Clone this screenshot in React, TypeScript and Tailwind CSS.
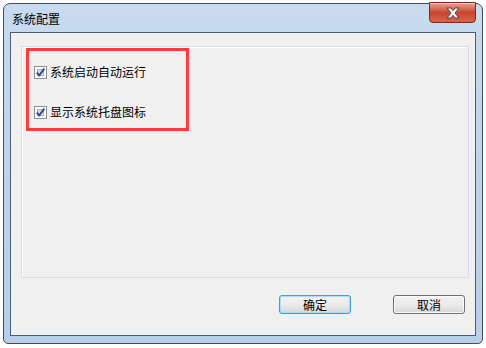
import React from 'react'

const font = { fontFamily: '"SimSun", "Noto Sans CJK SC", sans-serif' }

function CheckBox() {
  return (
    <span className="relative flex h-[13px] w-[13px] shrink-0 items-center justify-center border border-[#8e8f8f] bg-white">
      <span className="absolute inset-[2px] bg-gradient-to-br from-[#cbd0d6] to-[#f4f5f6] border border-[#aeb3b9]" />
      <svg className="relative" width="11" height="11" viewBox="0 0 11 11">
        <path d="M1.8 5.6 L4.2 8.4 L9.4 1.6" fill="none" stroke="#2a4a8e" strokeWidth="1.9" />
      </svg>
    </span>
  )
}

function Option({ label }: { label: string }) {
  return (
    <label className="flex h-[14px] items-center gap-[3px] text-[12px] leading-none text-black">
      <CheckBox />
      <span>{label}</span>
    </label>
  )
}

function Button({ label, focused }: { label: string; focused?: boolean }) {
  return (
    <button
      className={
        'h-[19px] w-[72px] rounded-[3px] border bg-gradient-to-b from-[#f2f2f2] via-[#ebebeb] to-[#d6d6d6] text-[12px] leading-none text-black ' +
        (focused ? 'border-[#3c9fd6] shadow-[inset_0_0_0_1px_#a8ddf5]' : 'border-[#707070] shadow-[inset_0_0_0_1px_#fbfbfb]')
      }
    >
      {label}
    </button>
  )
}

export default function App() {
  return (
    <div className="h-[348px] w-[486px] bg-white pl-[3px] pr-[3px] pt-[3px] pb-[4px]" style={font}>
      <div className="flex h-full flex-col rounded-t-[7px] rounded-b-[5px] border border-[#3f4d5e] bg-gradient-to-b from-[#c8dbef] via-[#bcd3eb] to-[#b8cfe9]">
        {/* Barre de titre */}
        <div className="flex h-[28px] items-start justify-between">
          <span className="pl-[8px] pt-[9px] text-[12px] leading-none text-black">系统配置</span>
          <div className="-mt-[2px] mr-[6px] flex h-[21px] w-[47px] items-center justify-center rounded-b-[4px] border border-[#7d2a1d] bg-gradient-to-b from-[#e8a193] via-[#c9452e] to-[#d8634b] shadow-[inset_0_1px_0_#f2c4ba]">
            <svg width="16" height="12" viewBox="0 0 16 12">
              <path
                d="M2 1 H6 L8 3.6 L10 1 H14 L10 6 L14 11 H10 L8 8.4 L6 11 H2 L6 6 Z"
                fill="#f4f4f4"
                stroke="#4a4a4a"
                strokeWidth="1"
                strokeLinejoin="round"
              />
            </svg>
          </div>
        </div>

        {/* Zone client */}
        <div className="mx-[6px] mb-[7px] flex flex-1 flex-col border border-[#4f5c6c] bg-[#f0f0f0]">
          <div className="ml-[10px] mr-[6px] mt-[13px] h-[232px] border border-[#d5dfe5] shadow-[inset_1px_1px_0_#ffffff]">
            <div className="ml-[4px] mt-[1px] flex h-[83px] w-[163px] flex-col gap-[26px] border-[3px] border-[#ff3b3b] pl-[5px] pt-[14px]">
              <Option label="系统启动自动运行" />
              <Option label="显示系统托盘图标" />
            </div>
          </div>
          <div className="mt-[17px] flex justify-end gap-[42px] pr-[10px]">
            <Button label="确定" focused />
            <Button label="取消" />
          </div>
        </div>
      </div>
    </div>
  )
}
